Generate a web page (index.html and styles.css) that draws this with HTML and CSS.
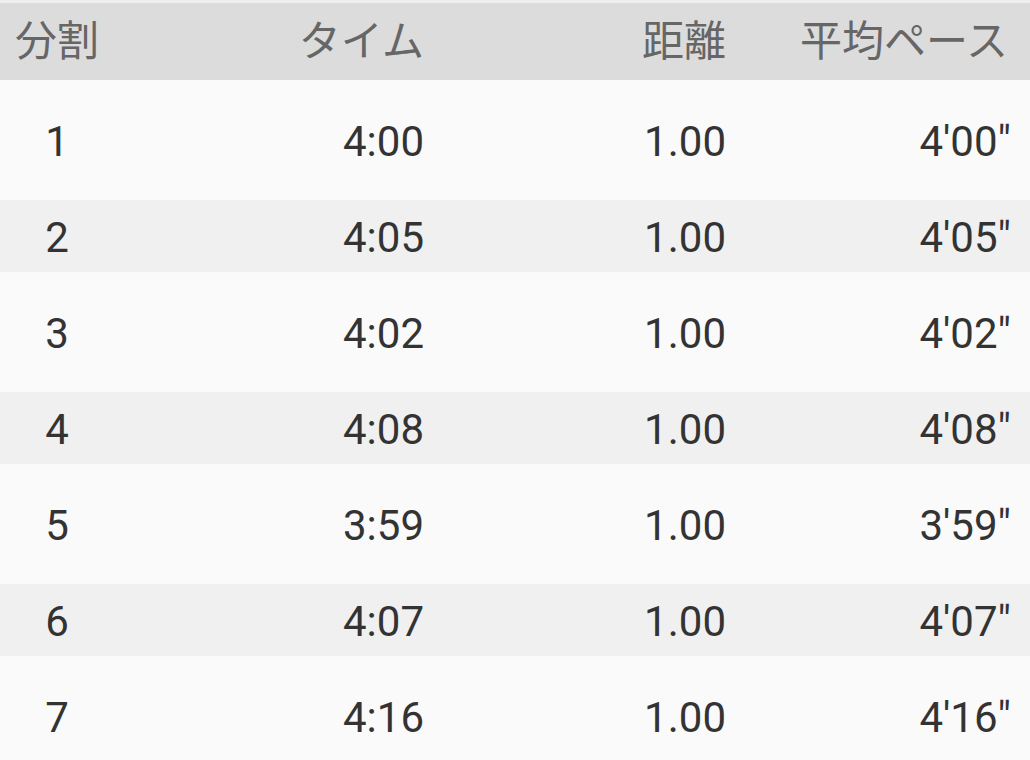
FILE: index.html
```html
<!DOCTYPE html>
<html lang="ja">
<head>
<meta charset="utf-8">
<title>分割</title>
<link rel="stylesheet" href="styles.css">
</head>
<body>
<div class="table">
  <div class="row head">
    <div class="c1">分割</div>
    <div class="c2">タイム</div>
    <div class="c3">距離</div>
    <div class="c4">平均ペース</div>
  </div>
  <div class="row odd"><div class="c1">1</div><div class="c2">4:00</div><div class="c3">1.00</div><div class="c4">4'00"</div></div>
  <div class="row even"><div class="c1">2</div><div class="c2">4:05</div><div class="c3">1.00</div><div class="c4">4'05"</div></div>
  <div class="row odd"><div class="c1">3</div><div class="c2">4:02</div><div class="c3">1.00</div><div class="c4">4'02"</div></div>
  <div class="row even"><div class="c1">4</div><div class="c2">4:08</div><div class="c3">1.00</div><div class="c4">4'08"</div></div>
  <div class="row odd"><div class="c1">5</div><div class="c2">3:59</div><div class="c3">1.00</div><div class="c4">3'59"</div></div>
  <div class="row even"><div class="c1">6</div><div class="c2">4:07</div><div class="c3">1.00</div><div class="c4">4'07"</div></div>
  <div class="row odd"><div class="c1">7</div><div class="c2">4:16</div><div class="c3">1.00</div><div class="c4">4'16"</div></div>
</div>
</body>
</html>
```
FILE: styles.css
```css
html, body {
  margin: 0;
  padding: 0;
  background: #fafafa;
}
body {
  font-family: Roboto, "Noto Sans CJK JP", sans-serif;
  font-size: 42px;
  color: #333333;
  border-top: 3px solid #efefef;
}
.row {
  display: grid;
  grid-template-columns: 84px 325px 302px 282px;
  padding: 0 22px 0 15px;
  align-items: center;
  line-height: 1;
  white-space: nowrap;
}
.head {
  height: 77px;
  background: #dcdcdc;
  color: #666666;
}
.odd {
  height: 120px;
  background: #fafafa;
}
.even {
  height: 72px;
  background: #f0f0f0;
}
.c1 { text-align: center; }
.c2, .c3, .c4 { text-align: right; }
.row:not(.head) > .c4 { margin-right: -3px; }
.row:not(.head) > div { padding-top: 3px; }
```
